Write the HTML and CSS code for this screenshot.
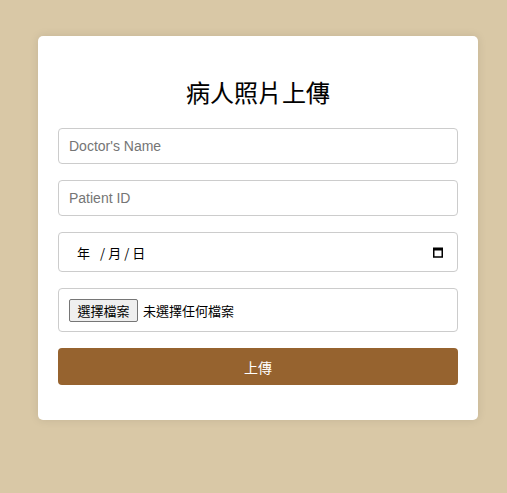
FILE: index.html
```html
<!DOCTYPE html>
<html lang="zh-Hant">
<head>
<meta charset="utf-8">
<title>病人照片上傳</title>
<link rel="stylesheet" href="styles.css">
</head>
<body>
<div class="card">
  <h2 class="title">病人照片上傳</h2>
  <form class="form">
    <input class="field text-field" type="text" placeholder="Doctor's Name">
    <input class="field text-field" type="text" placeholder="Patient ID">
    <div class="field date-field">
      <span class="date-text"><span class="seg">年</span><span class="sep">/</span><span class="seg">月</span><span class="sep">/</span><span class="seg">日</span></span>
      <svg class="cal-icon" width="10" height="11" viewBox="0 0 10 11"><rect x="0.75" y="1.25" width="8.5" height="8.75" fill="none" stroke="#000" stroke-width="1.5"/><rect x="0" y="1" width="10" height="2.5" fill="#000"/></svg>
    </div>
    <div class="field file-field">
      <span class="file-btn">選擇檔案</span>
      <span class="file-text">未選擇任何檔案</span>
    </div>
    <button class="submit" type="button">上傳</button>
  </form>
</div>
</body>
</html>
```
FILE: styles.css
```css
html, body {
  margin: 0;
  padding: 0;
}
body {
  background: #d9c8a6;
  min-height: 493px;
  font-family: "Liberation Sans", "Noto Sans CJK TC", sans-serif;
}
.card {
  box-sizing: border-box;
  width: 440px;
  margin: 36px 0 0 38px;
  padding: 20px 20px 35px;
  background: #fff;
  border-radius: 5px;
  box-shadow: 0 0 10px rgba(0, 0, 0, 0.1);
}
.title {
  margin: 21px 0 21px;
  font-family: "Noto Sans CJK TC", sans-serif;
  font-size: 24px;
  font-weight: 400;
  line-height: 30px;
  text-align: center;
  color: #000;
  -webkit-text-stroke: 0.1px #000;
}
.form {
  display: flex;
  flex-direction: column;
  gap: 16px;
}
.field {
  box-sizing: border-box;
  width: 400px;
  margin: 0;
  border: 1px solid #cccccc;
  border-radius: 4px;
  background: #fff;
}
.text-field {
  height: 36px;
  padding: 0 10px;
  font-family: "Liberation Sans", sans-serif;
  font-size: 14px;
  color: #000;
  outline: none;
}
.text-field::placeholder {
  color: #757575;
}
.date-field {
  height: 40px;
  display: flex;
  align-items: center;
  justify-content: space-between;
  padding: 0 14px 0 18px;
  font-family: "Noto Sans CJK TC", sans-serif;
  font-size: 13px;
  color: #000;
}
.date-text {
  display: flex;
  align-items: center;
}
.seg {
  display: inline-block;
}
.sep {
  display: inline-block;
  margin: 0 3px 0 10px;
}
.sep + .seg + .sep {
  margin-left: 3px;
}
.cal-icon {
  display: block;
  margin-top: 1px;
}
.file-field {
  height: 44px;
  display: flex;
  align-items: center;
  padding: 0 10px;
  font-family: "Noto Sans CJK TC", sans-serif;
  font-size: 13px;
  color: #000;
}
.file-btn {
  box-sizing: border-box;
  height: 23px;
  width: 69px;
  display: flex;
  align-items: center;
  justify-content: center;
  background: #efefef;
  border: 1px solid #767676;
  border-radius: 2px;
  margin-right: 5px;
}
.submit {
  box-sizing: border-box;
  width: 400px;
  height: 37px;
  border: none;
  border-radius: 4px;
  background: #96632f;
  color: #fff;
  font-family: "Noto Sans CJK TC", sans-serif;
  font-size: 14px;
  cursor: pointer;
}
```
